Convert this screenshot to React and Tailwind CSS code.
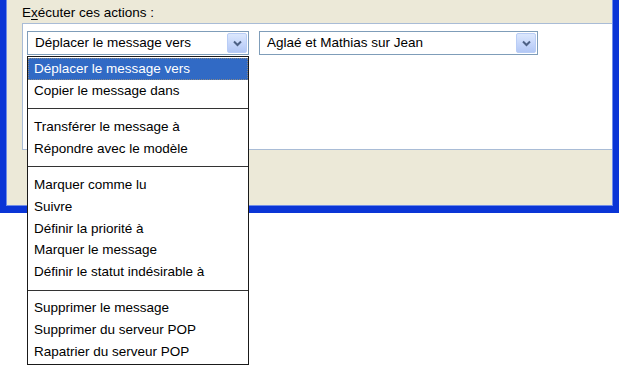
import React from 'react';

const groups = [
  ['Déplacer le message vers', 'Copier le message dans'],
  ['Transférer le message à', 'Répondre avec le modèle'],
  ['Marquer comme lu', 'Suivre', 'Définir la priorité à', 'Marquer le message', 'Définir le statut indésirable à'],
  ['Supprimer le message', 'Supprimer du serveur POP', 'Rapatrier du serveur POP'],
];

const ArrowButton = () => (
  <div className="absolute right-[1px] top-[1px] bottom-[1px] w-[20px] rounded-[2px] border border-[#b9cdf6] bg-[linear-gradient(180deg,#dce8fd_0%,#c3d4fa_60%,#b3c8f5_100%)] flex items-center justify-center">
    <svg width="9" height="7" viewBox="0 0 9 7">
      <path d="M1 1.5 L4.5 5 L8 1.5" fill="none" stroke="#4d6185" strokeWidth="2" />
    </svg>
  </div>
);

const Combo = ({ label, width }) => (
  <div className={`relative h-[24px] border border-[#7f9db9] bg-white ${width}`}>
    <div className="pl-[7px] leading-[22px] text-[#000]">{label}</div>
    <ArrowButton />
  </div>
);

export default function App() {
  return (
    <div className="relative w-[619px] h-[365px] bg-white overflow-hidden text-[13.5px]" style={{ fontFamily: 'Tahoma, "Liberation Sans", Arial, sans-serif' }}>
      <div className="w-[619px] h-[213px] bg-[#0a35d6] pl-[6px] pr-[6px] pb-[7px]">
        <div className="h-full bg-[#ece9d8] border-l border-r border-b border-[#6f8de8] pl-[15px]">
          <div className="pt-[3px] h-[23px] text-[#000]">
            E<span className="underline underline-offset-2">x</span>écuter ces actions :
          </div>
          <div className="h-[127px] bg-white border-t border-l border-b border-[#a9bcd6] pl-[4px] pt-[7px]">
            <div className="flex gap-[10px]">
              <Combo label="Déplacer le message vers" width="w-[222px]" />
              <Combo label="Aglaé et Mathias sur Jean" width="w-[279px]" />
            </div>
          </div>
        </div>
      </div>

      <div className="absolute left-[27px] top-[56px] w-[222px] border border-[#1a1a1a] bg-white py-[1px]">
        {groups.map((items, gi) => (
          <div key={gi}>
            {gi > 0 && (
              <div className="h-[14.5px] flex items-center">
                <div className="w-full h-px bg-[#333]" />
              </div>
            )}
            {items.map((item, ii) => {
              const active = gi === 0 && ii === 0;
              return (
                <div
                  key={item}
                  className={`h-[21.75px] leading-[21px] pl-[6px] ${active ? 'bg-[#316ac5] text-white outline-1 outline-dotted outline-[#888] -outline-offset-1' : 'text-black'}`}
                >
                  {item}
                </div>
              );
            })}
          </div>
        ))}
      </div>
    </div>
  );
}
